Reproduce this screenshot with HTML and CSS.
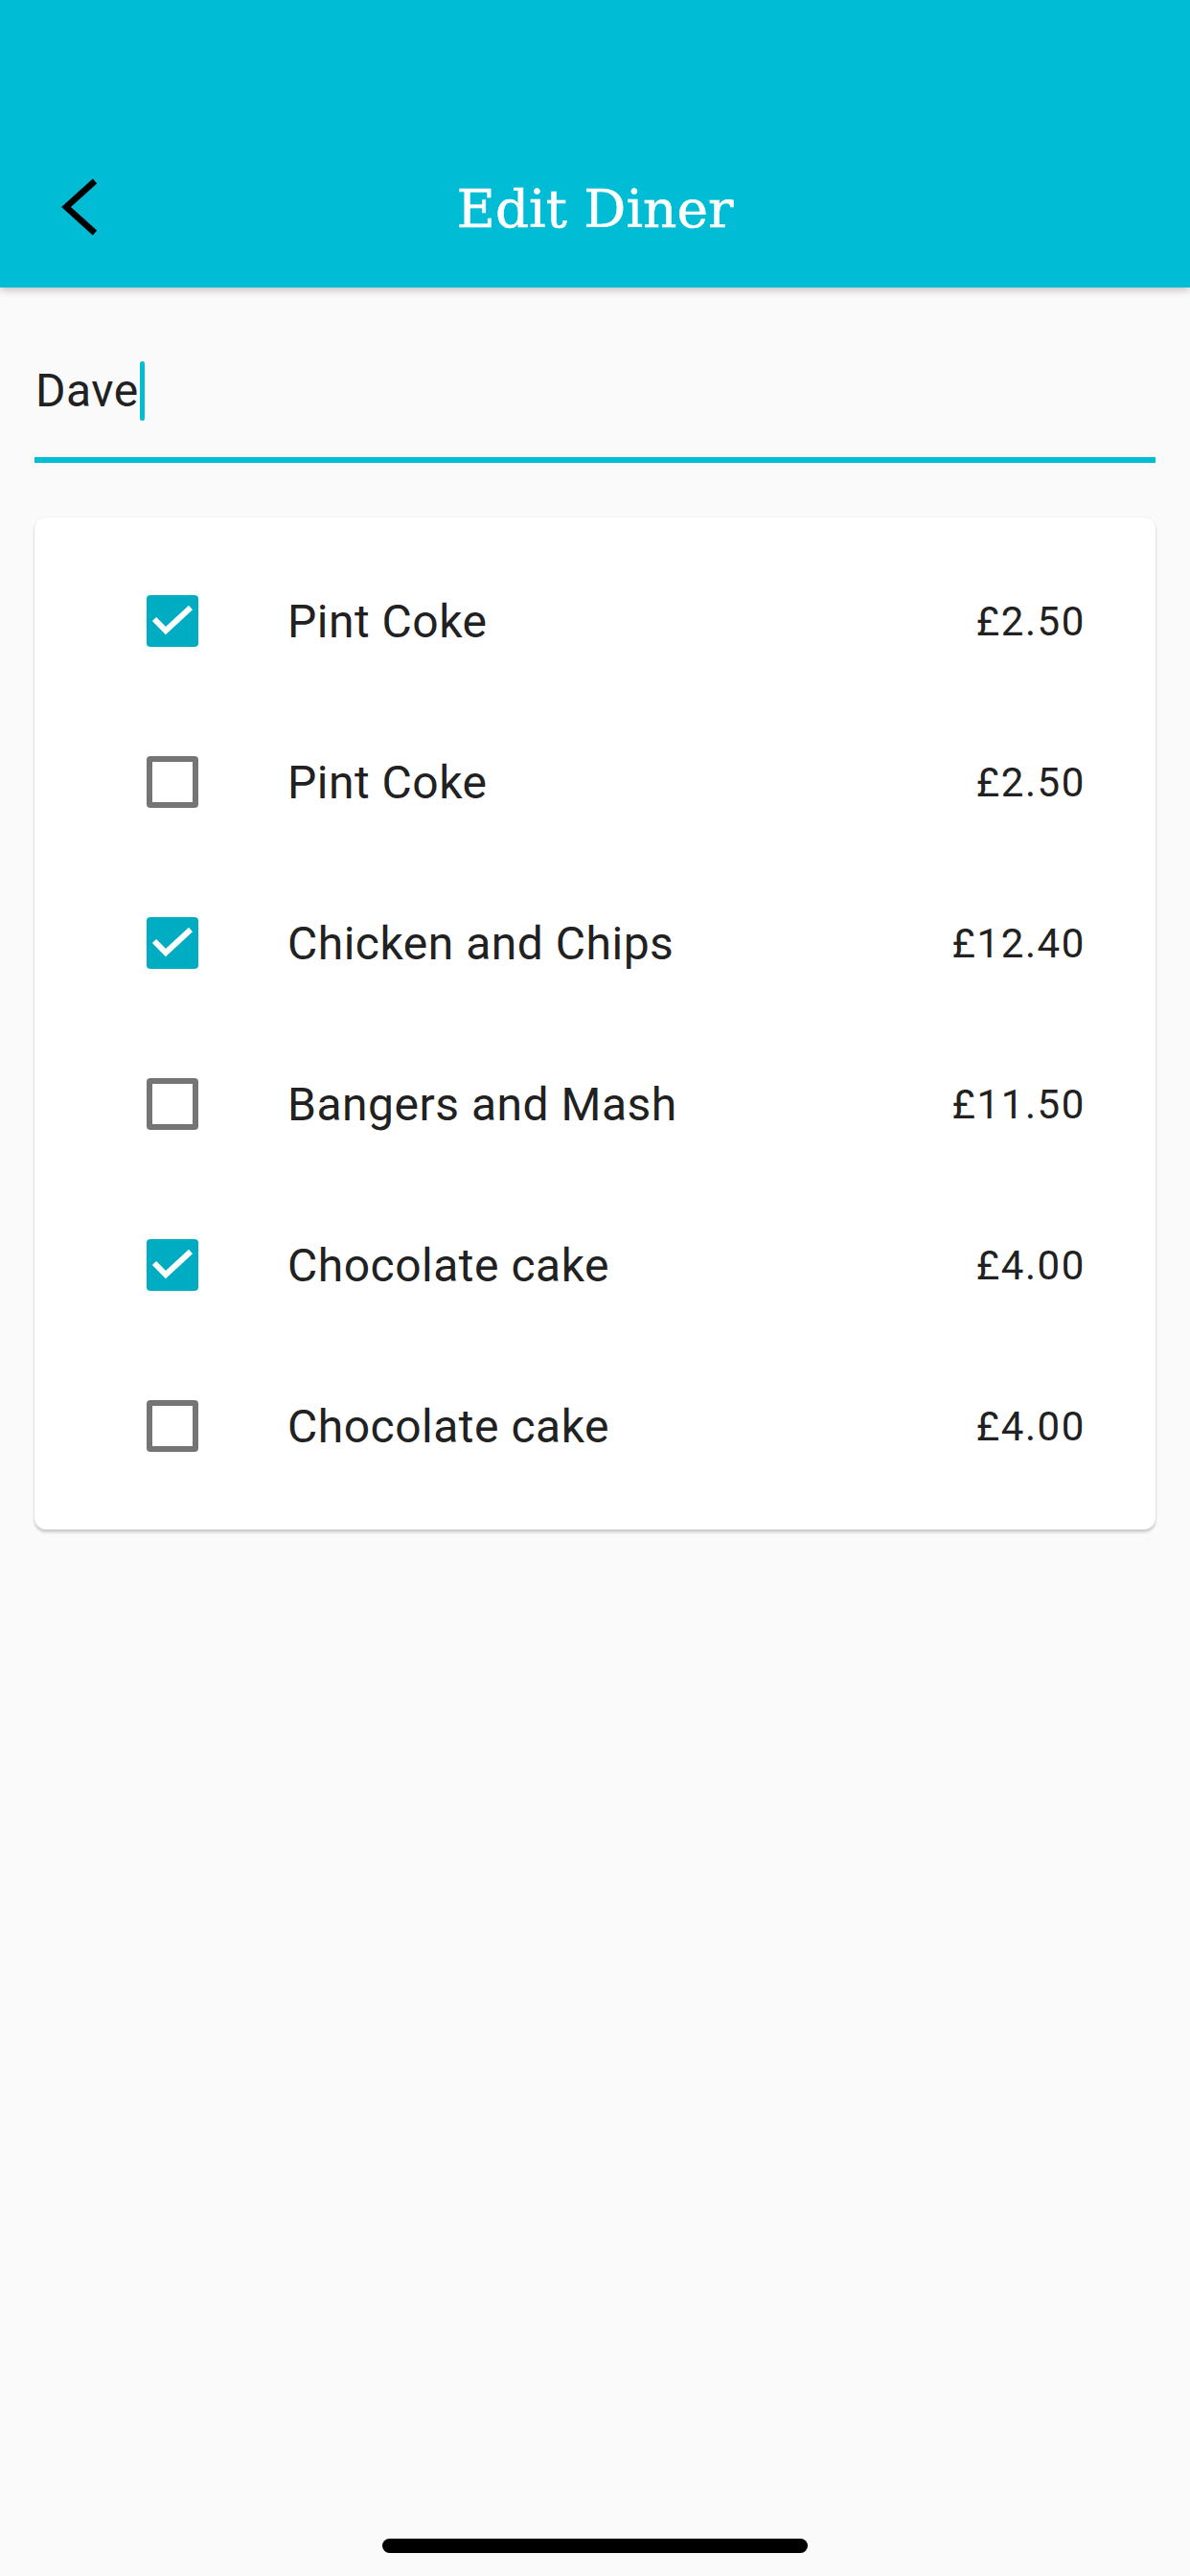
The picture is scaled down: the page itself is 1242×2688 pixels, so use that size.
FILE: index.html
```html
<!DOCTYPE html>
<html>
<head>
<meta charset="utf-8">
<link rel="stylesheet" href="styles.css">
</head>
<body>
<div class="page">
  <header class="header">
    <div class="statusbar"></div>
    <div class="appbar">
      <div class="appbar-left">
        <svg class="back" width="60" height="80" viewBox="0 0 60 80">
          <polyline points="40,13 10,40 40,67" fill="none" stroke="#000" stroke-width="6.5" stroke-linecap="butt" stroke-linejoin="miter"/>
        </svg>
      </div>
      <div class="title">Edit Diner</div>
      <div class="appbar-right"></div>
    </div>
  </header>

  <div class="field">
    <div class="field-line">
      <span class="field-text">Dave</span><span class="cursor"></span>
    </div>
  </div>

  <div class="card">
    <div class="row">
      <span class="check on"><svg width="54" height="54" viewBox="0 0 54 54"><polyline points="8,25 20,37 46,13" fill="none" stroke="#fff" stroke-width="6"/></svg></span>
      <span class="label">Pint Coke</span>
      <span class="price">£2.50</span>
    </div>
    <div class="row">
      <span class="check"></span>
      <span class="label">Pint Coke</span>
      <span class="price">£2.50</span>
    </div>
    <div class="row">
      <span class="check on"><svg width="54" height="54" viewBox="0 0 54 54"><polyline points="8,25 20,37 46,13" fill="none" stroke="#fff" stroke-width="6"/></svg></span>
      <span class="label">Chicken and Chips</span>
      <span class="price">£12.40</span>
    </div>
    <div class="row">
      <span class="check"></span>
      <span class="label">Bangers and Mash</span>
      <span class="price">£11.50</span>
    </div>
    <div class="row">
      <span class="check on"><svg width="54" height="54" viewBox="0 0 54 54"><polyline points="8,25 20,37 46,13" fill="none" stroke="#fff" stroke-width="6"/></svg></span>
      <span class="label">Chocolate cake</span>
      <span class="price">£4.00</span>
    </div>
    <div class="row">
      <span class="check"></span>
      <span class="label">Chocolate cake</span>
      <span class="price">£4.00</span>
    </div>
  </div>

  <div class="home-indicator"></div>
</div>
</body>
</html>
```
FILE: styles.css
```css
html, body {
  margin: 0;
  padding: 0;
}
body {
  background: #fafafa;
  font-family: Roboto, "Noto Sans", sans-serif;
  color: #212121;
}
.page {
  width: 1242px;
  min-height: 2688px;
  display: flex;
  flex-direction: column;
}
.header {
  background: #00bcd4;
  height: 300px;
  display: flex;
  flex-direction: column;
  box-shadow: 0 3px 8px rgba(0, 0, 0, 0.22);
  position: relative;
  z-index: 1;
}
.statusbar {
  height: 132px;
}
.appbar {
  height: 168px;
  display: grid;
  grid-template-columns: 1fr auto 1fr;
  align-items: center;
}
.appbar-left {
  display: flex;
  align-items: center;
  padding-left: 59px;
}
.back {
  display: block;
}
.title {
  font-family: "DejaVu Serif", "Liberation Serif", serif;
  font-size: 55px;
  color: #fff;
  line-height: 1;
  padding-top: 4px;
  -webkit-text-stroke: 0.6px #fff;
}
.field {
  padding: 77px 0 0;
  margin: 0 36px;
  border-bottom: 6px solid #00bcd4;
  padding-bottom: 38px;
}
.field-line {
  display: flex;
  align-items: stretch;
  height: 62px;
}
.field-text {
  font-size: 48px;
  line-height: 62px;
  color: #212121;
  padding-left: 1px;
  letter-spacing: 0.5px;
}
.cursor {
  width: 5px;
  height: 62px;
  background: #00bcd4;
  border-radius: 3px;
  margin-left: 1px;
}
.card {
  margin: 57px 36px 0;
  background: #fff;
  border-radius: 12px;
  box-shadow: 0 3px 3px rgba(0, 0, 0, 0.18), 0 0 2px rgba(0, 0, 0, 0.1);
  padding: 24px 0;
}
.row {
  height: 168px;
  display: flex;
  align-items: center;
  padding-left: 117px;
  padding-right: 73px;
}
.check {
  width: 54px;
  height: 54px;
  box-sizing: border-box;
  border: 6px solid #757575;
  border-radius: 4px;
  flex: none;
  position: relative;
}
.check.on {
  background: #00acc1;
  border: none;
}
.check svg {
  display: block;
}
.label {
  flex: 1;
  margin-left: 93px;
  font-size: 48px;
  color: #212121;
  letter-spacing: 0.5px;
}
.price {
  font-size: 42px;
  color: #212121;
  letter-spacing: 1.6px;
}
.home-indicator {
  margin: auto auto 24px;
  width: 444px;
  height: 15px;
  background: #000;
  border-radius: 8px;
}
```
